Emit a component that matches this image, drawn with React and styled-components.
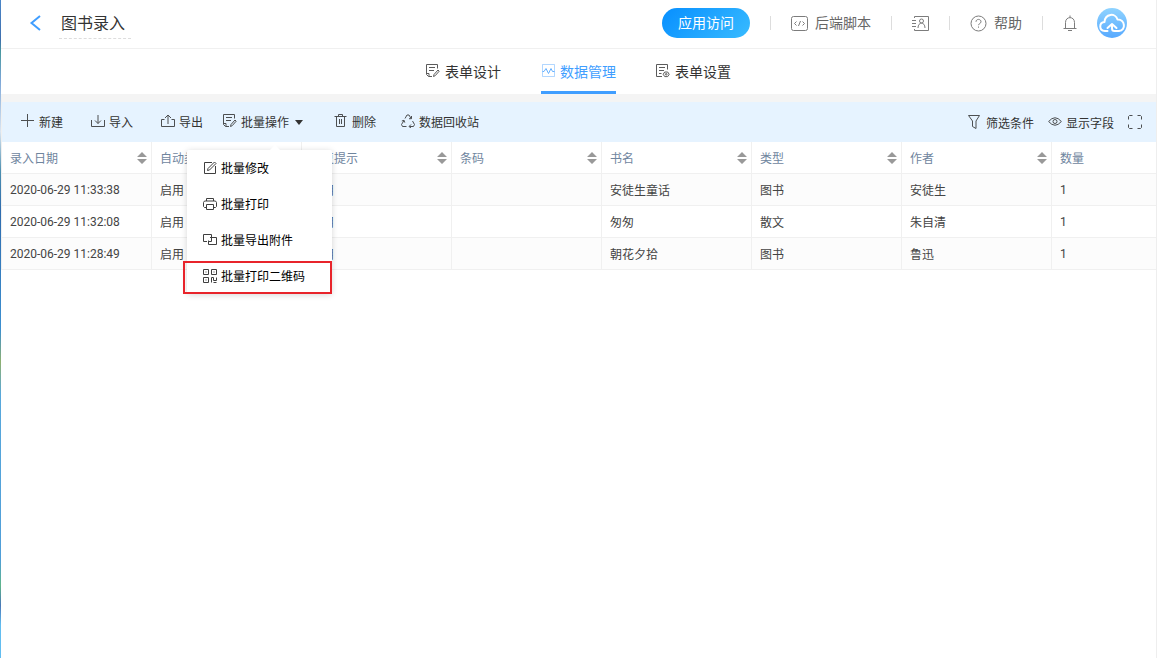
import React from "react"
import styled, { createGlobalStyle, css } from "styled-components"

const GlobalStyle = createGlobalStyle`
  * {
    box-sizing: border-box;
  }
  body {
    margin: 0;
    background: #fff;
    color: #333;
    font-family: Roboto, "Noto Sans CJK SC", sans-serif;
    font-size: 12px;
  }
  button {
    font: inherit;
    color: inherit;
    border: 0;
    padding: 0;
    background: none;
    cursor: pointer;
  }
  a {
    color: inherit;
    text-decoration: none;
  }
`

const Page = styled.div`
  min-height: 100vh;
  display: flex;
  border-right: 1px solid #eee;
`

const Edge = styled.div`
  flex: none;
  width: 1px;
  background: linear-gradient(
    #4a86c8 0%,
    #3f6fae 6%,
    #4a9aa0 8%,
    #7aa5d6 12%,
    #dbe6f2 20%,
    #4c8fb0 26%,
    #2f6cae 32%,
    #3c8fd0 50%,
    #8fb070 55%,
    #58a8dc 60%,
    #4f9ed8 85%,
    #5fb58a 89%,
    #4a78b8 92%,
    #62bdf0 95%,
    #62bdf0 100%
  );
`

const Main = styled.div`
  flex: 1;
  min-width: 0;
`

const Header = styled.header`
  display: flex;
  align-items: center;
  height: 49px;
  padding: 0 29px 2px 27px;
  border-bottom: 1px solid #f0f0f0;
`

const Back = styled.button`
  display: flex;
  color: #409eff;
`

const Title = styled.h1`
  margin: 3px auto 0 17px;
  padding: 0 6px 0 2px;
  border-bottom: 1px dashed #ddd;
  font-size: 16px;
  font-weight: 400;
  line-height: 28px;
`

const HeaderActions = styled.div`
  display: flex;
  align-items: center;
  gap: 20px;
  color: #666;
  font-size: 14px;
`

const VisitButton = styled.button`
  height: 30px;
  padding: 0 16px 2px;
  border-radius: 15px;
  color: #fff;
  background: linear-gradient(135deg, #078fff, #38bbff);
`

const Divider = styled.span`
  width: 1px;
  height: 14px;
  background: #ddd;
`

const HeaderLink = styled.a`
  display: flex;
  align-items: center;
  gap: 7px;
  svg {
    opacity: 0.85;
  }
`

const HeaderLabel = styled.span`
  padding-bottom: 2px;
`

const Tabs = styled.nav`
  display: flex;
  justify-content: center;
  gap: 40px;
  height: 45px;
`

const Tab = styled.a`
  display: flex;
  align-items: center;
  gap: 5px;
  padding-top: 1px;
  border-bottom: 3px solid transparent;
  font-size: 14px;
  svg {
    opacity: 0.8;
  }
  ${props =>
    props.$active &&
    css`
      color: #409eff;
      border-color: #409eff;
    `}
`

const Panel = styled.section`
  border-top: 8px solid #f4f4f4;
  border-left: 1px solid #f0f0f0;
`

const Toolbar = styled.div`
  display: flex;
  align-items: center;
  height: 40px;
  padding: 0 14px 2px 19px;
  background: #e6f3ff;
`

const ToolGroup = styled.div`
  display: flex;
  align-items: center;
  gap: ${props => props.$gap}px;
  ${props =>
    props.$end &&
    css`
      margin-left: auto;
      padding-top: 2px;
    `}
`

const Tool = styled.button`
  display: flex;
  align-items: center;
  gap: 4px;
  white-space: nowrap;
  svg {
    opacity: 0.85;
  }
`

const Dropdown = styled.div`
  position: relative;
  margin: 0 31px 0 20px;
`

const Caret = styled.span`
  margin: 2px 0 0 2px;
  border: 4px solid transparent;
  border-top: 5px solid #333;
  border-bottom: 0;
`

const Menu = styled.div`
  position: absolute;
  z-index: 1;
  top: 37px;
  left: -36px;
  width: 145px;
  background: #fff;
  color: #000;
  border-radius: 2px;
  box-shadow: 0 1px 6px rgba(0, 0, 0, 0.16);
  &::before {
    content: "";
    position: absolute;
    top: -5px;
    left: 83px;
    border: 5px solid transparent;
    border-top: 0;
    border-bottom-color: #fff;
  }
`

const MenuItem = styled.button`
  display: flex;
  align-items: center;
  gap: 4px;
  width: 100%;
  height: 36px;
  padding-left: 16px;
  svg {
    opacity: 0.75;
  }
  ${props =>
    props.$marked &&
    css`
      position: relative;
      &::after {
        content: "";
        position: absolute;
        inset: 3px 0 0 -4px;
        border: 2px solid #e8242b;
      }
    `}
`

const Table = styled.table`
  width: 100%;
  border-collapse: separate;
  border-spacing: 0;
  table-layout: fixed;
  th,
  td {
    height: 32px;
    padding: 0 4px 0 8px;
    border-right: 1px solid #f0f0f0;
    border-bottom: 1px solid #f0f0f0;
    text-align: left;
    white-space: nowrap;
  }
  th {
    color: #6f859e;
    font-weight: 400;
  }
  th:last-child,
  td:last-child {
    border-right: 0;
  }
  td {
    color: #444;
  }
  tbody tr:nth-child(odd) {
    background: #fcfcfc;
  }
`

const Col = styled.col`
  width: ${props => (props.$fill ? "auto" : "150px")};
`

const HeadCell = styled.div`
  display: flex;
  align-items: center;
  justify-content: space-between;
`

const SortButton = styled.button`
  display: flex;
  color: #999;
`

const Icon = ({ size = 14, children }) => (
  <svg
    width={size}
    height={size}
    viewBox="0 0 14 14"
    fill="none"
    stroke="currentColor"
    strokeWidth="1"
    aria-hidden="true"
  >
    {children}
  </svg>
)

const FormEditIcon = () => (
  <Icon>
    <path d="M11.5 4.5v-4h-11v10l2 2H6M3 3.5h6M3 6.5h5M.5 9.5H3v3M7.5 12.500l.5-2L12 6l1.200 1.200-4 4.500z" />
  </Icon>
)

const FormSettingIcon = () => (
  <Icon>
    <path d="M11.5 5.500v-5h-11v12h5.500M3 3.500h6M3 6.500h5M3 9.500h2.500" />
    <path d="M8.700 8h3l1.500 2.300-1.500 2.300h-3l-1.500-2.300z" />
    <circle cx="10.200" cy="10.300" r=".8" />
  </Icon>
)

const ChartIcon = () => (
  <Icon>
    <path d="M1.500.5h12v12h-12z" opacity=".5" />
    <path d="M1.500 7.500h1.500l2-3 2.500 5 2.500-5 1.500 3h2" />
  </Icon>
)

const PlusIcon = () => (
  <Icon>
    <path d="M6.500 0v13M0 6.500h13" />
  </Icon>
)

const ImportIcon = () => (
  <Icon>
    <path d="M.5 6v6.500h13V6M7 1v8.500M4 6.500l3 3 3-3" />
  </Icon>
)

const ExportIcon = () => (
  <Icon>
    <path d="M3.500 5.500h-3v7h13v-7h-3M7 10V1M4 4l3-3 3 3" />
  </Icon>
)

const TrashIcon = () => (
  <Icon>
    <path d="M.5 2.500h12M4.500 2.500v-2h4v2M2.500 2.500v10h8v-10M5.500 5v5M7.500 5v5" />
  </Icon>
)

const RecycleIcon = () => (
  <Icon>
    <path d="M4 4.500 6 1h2l2 3.500M10.500 2v2.700H8M11.500 7l2 3.500-1 2H8.500M10 10.500l-2 2 2 1.500M5.500 12.500h-4l-1-2L3 6.500M.8 7 3 6.300l.8 2.300" />
  </Icon>
)

const FilterIcon = () => (
  <Icon>
    <path d="M.5.500h11L8 6v7.500l-3.500-2V6z" />
  </Icon>
)

const EyeIcon = () => (
  <Icon>
    <path d="M.6 6.500Q7-1 13.400 6.500 7 14 .6 6.500z" />
    <circle cx="7" cy="6.500" r="2" />
  </Icon>
)

const FullscreenIcon = () => (
  <Icon>
    <path d="M.5 4.500v-3l1-1h3M9.500.500h3l1 1v3M13.500 9.500v3l-1 1h-3M4.500 13.500h-3l-1-1v-3" />
  </Icon>
)

const EditIcon = () => (
  <Icon>
    <path d="M9 1.500H1.500v11h11V5M4.500 9.500l.5-2 6.500-6.500 1.500 1.500L6.500 9z" />
  </Icon>
)

const PrinterIcon = () => (
  <Icon>
    <path d="M3.500 4v-2.500h7V4M3.500 10.500h-2l-1-1v-4l1-1.500h11l1 1.500v4l-1 1h-2M3.500 7.500h7v5h-7z" />
  </Icon>
)

const AttachmentIcon = () => (
  <Icon>
    <path d="M4 8.500H.5v-7h8V4M7 4.500h6.500v7h-8v-4M5.500 8.500h3v-4" />
  </Icon>
)

const QrIcon = () => (
  <Icon>
    <path d="M.5.500h5v5h-5zM8.500.500h5v5h-5zM.5 8.500h5v5h-5zM2.500 3h1M10.500 3h1M2.500 11h1M8.500 13.500v-5h2v3h3v-3M10.500 13.500h3" />
  </Icon>
)

const CodeIcon = () => (
  <svg width="17" height="17" viewBox="0 0 17 17" fill="none" stroke="currentColor" aria-hidden="true">
    <rect x=".5" y="1.500" width="16" height="14" rx="2" />
    <path d="M5.500 6.500 3.500 8.500l2 2M11.500 6.500l2 2-2 2M9.500 6l-2 5" />
  </svg>
)

const ContactsIcon = () => (
  <svg width="17" height="17" viewBox="0 0 17 17" fill="none" stroke="currentColor" aria-hidden="true">
    <path d="M2.500 3V1.500h14v14h-14V14M0 5.500h4M0 8.500h4M0 11.500h4" />
    <circle cx="9.500" cy="6" r="2" />
    <path d="M6 13c0-6.500 7-6.500 7 0" />
  </svg>
)

const HelpIcon = () => (
  <svg width="17" height="17" viewBox="0 0 17 17" fill="none" stroke="currentColor" aria-hidden="true">
    <circle cx="8.500" cy="8.500" r="7.500" />
    <path d="M6 6.800c0-3.200 5-3.200 5 0 0 1.800-2.500 1.700-2.500 3.400M8.500 11.500v1.200" />
  </svg>
)

const BellIcon = () => (
  <svg width="14" height="17" viewBox="0 0 14 17" fill="none" stroke="currentColor" aria-hidden="true">
    <path d="M2.500 13.500v-6C2.500 1 11.500 1 11.500 7.500v6M.5 13.500h13M7 2.500v-2M5 15.500h4" />
  </svg>
)

const Avatar = () => (
  <svg width="30" height="30" viewBox="0 0 30 30" fill="none" role="img" aria-label="用户">
    <defs>
      <linearGradient id="sky" x1="0" y1="0" x2="0" y2="1">
        <stop offset="0" stopColor="#8fd3ff" />
        <stop offset="1" stopColor="#58aaff" />
      </linearGradient>
    </defs>
    <circle cx="15" cy="15" r="15" fill="url(#sky)" />
    <path
      d="M10.500 23H8C1.500 22.500 2 14.500 7.500 14 8 5.500 18.500 4.500 20.500 11.500 28 11 29.500 22.500 22 23h-4.500c-2 0-2.500-1-2.500-2.500v-4M10.500 20l4.500-4 4.500 4"
      stroke="#fff"
      strokeWidth="2"
      strokeLinecap="round"
      strokeLinejoin="round"
    />
  </svg>
)

const ChevronIcon = () => (
  <svg width="14" height="16" viewBox="0 0 14 16" fill="none" stroke="currentColor" strokeWidth="2" aria-hidden="true">
    <path d="M12 1 3.500 8l8.500 7" />
  </svg>
)

const SortIcon = () => (
  <svg width="10" height="12" viewBox="0 0 10 12" fill="currentColor" aria-hidden="true">
    <path d="M0 5 5 0l5 5zM0 7h10l-5 5z" />
  </svg>
)

const columns = ["录入日期", "自动类型", "重复提示", "条码", "书名", "类型", "作者", "数量"]

const rows = [
  ["2020-06-29 11:33:38", "启用", "启用", "", "安徒生童话", "图书", "安徒生", "1"],
  ["2020-06-29 11:32:08", "启用", "启用", "", "匆匆", "散文", "朱自清", "1"],
  ["2020-06-29 11:28:49", "启用", "启用", "", "朝花夕拾", "图书", "鲁迅", "1"],
]

const App = () => (
  <>
    <GlobalStyle />
    <Page>
      <Edge />
      <Main>
        <Header>
          <Back aria-label="返回">
            <ChevronIcon />
          </Back>
          <Title>图书录入</Title>
          <HeaderActions>
            <VisitButton>应用访问</VisitButton>
            <Divider />
            <HeaderLink href="#script">
              <CodeIcon />
              <HeaderLabel>后端脚本</HeaderLabel>
            </HeaderLink>
            <Divider />
            <HeaderLink href="#contacts" aria-label="通讯录">
              <ContactsIcon />
            </HeaderLink>
            <Divider />
            <HeaderLink href="#help">
              <HelpIcon />
              <HeaderLabel>帮助</HeaderLabel>
            </HeaderLink>
            <Divider />
            <HeaderLink href="#messages" aria-label="消息">
              <BellIcon />
            </HeaderLink>
            <Avatar />
          </HeaderActions>
        </Header>
        <Tabs>
          <Tab href="#design">
            <FormEditIcon /> 表单设计
          </Tab>
          <Tab href="#data" $active>
            <ChartIcon /> 数据管理
          </Tab>
          <Tab href="#settings">
            <FormSettingIcon /> 表单设置
          </Tab>
        </Tabs>
        <Panel>
          <Toolbar>
            <ToolGroup $gap={28}>
              <Tool>
                <PlusIcon /> 新建
              </Tool>
              <Tool>
                <ImportIcon /> 导入
              </Tool>
              <Tool>
                <ExportIcon /> 导出
              </Tool>
            </ToolGroup>
            <Dropdown>
              <Tool aria-expanded="true">
                <FormEditIcon /> 批量操作 <Caret />
              </Tool>
              <Menu>
                <MenuItem>
                  <EditIcon /> 批量修改
                </MenuItem>
                <MenuItem>
                  <PrinterIcon /> 批量打印
                </MenuItem>
                <MenuItem>
                  <AttachmentIcon /> 批量导出附件
                </MenuItem>
                <MenuItem $marked>
                  <QrIcon /> 批量打印二维码
                </MenuItem>
              </Menu>
            </Dropdown>
            <ToolGroup $gap={25}>
              <Tool>
                <TrashIcon /> 删除
              </Tool>
              <Tool>
                <RecycleIcon /> 数据回收站
              </Tool>
            </ToolGroup>
            <ToolGroup $gap={14} $end>
              <Tool>
                <FilterIcon /> 筛选条件
              </Tool>
              <Tool>
                <EyeIcon /> 显示字段
              </Tool>
              <Tool aria-label="全屏">
                <FullscreenIcon />
              </Tool>
            </ToolGroup>
          </Toolbar>
          <Table>
            <colgroup>
              {columns.map((name, i) => (
                <Col key={name} $fill={i === columns.length - 1} />
              ))}
            </colgroup>
            <thead>
              <tr>
                {columns.map((name, i) => (
                  <th key={name}>
                    <HeadCell>
                      {name}
                      {i < columns.length - 1 && (
                        <SortButton aria-label={`${name}排序`}>
                          <SortIcon />
                        </SortButton>
                      )}
                    </HeadCell>
                  </th>
                ))}
              </tr>
            </thead>
            <tbody>
              {rows.map(row => (
                <tr key={row[0]}>
                  {row.map((cell, i) => (
                    <td key={columns[i]}>{cell}</td>
                  ))}
                </tr>
              ))}
            </tbody>
          </Table>
        </Panel>
      </Main>
    </Page>
  </>
)

export default App
